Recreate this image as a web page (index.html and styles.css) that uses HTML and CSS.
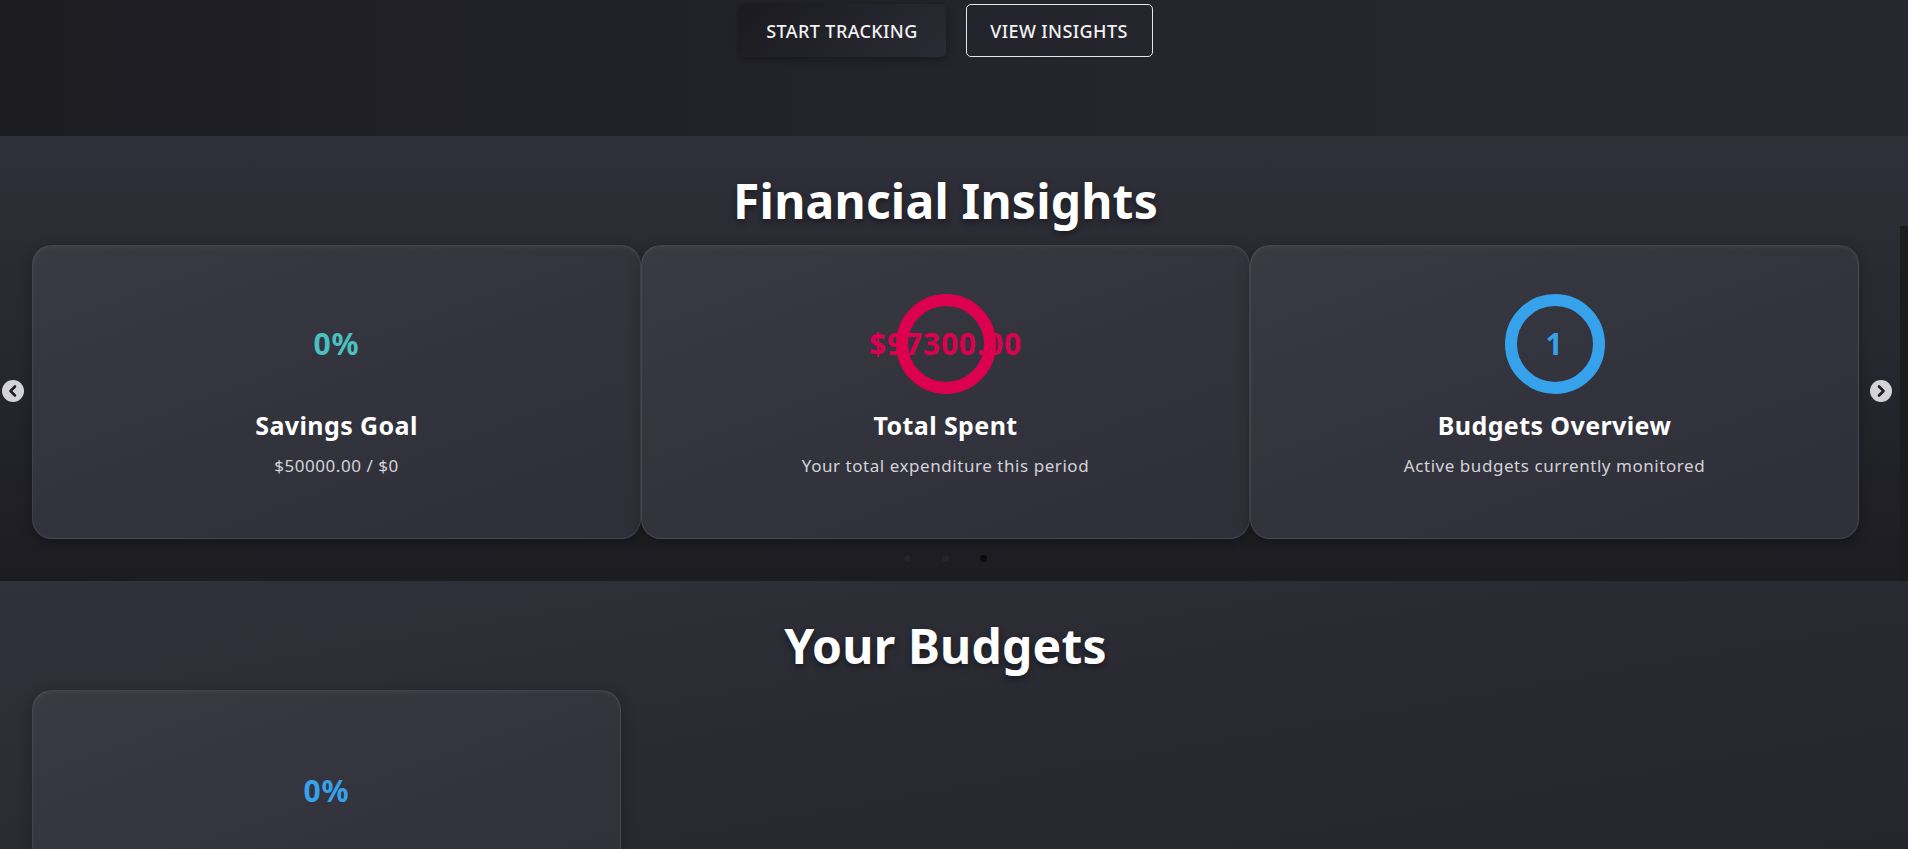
FILE: index.html
```html
<!DOCTYPE html>
<html lang="en">
<head>
<meta charset="utf-8">
<title>Finance Tracker</title>
<link rel="stylesheet" href="styles.css">
</head>
<body>
<header class="hero">
  <div class="hero-actions">
    <button class="btn btn-primary">START TRACKING</button>
    <button class="btn btn-outline">VIEW INSIGHTS</button>
  </div>
</header>

<section class="insights">
  <h2 class="section-title">Financial Insights</h2>
  <div class="carousel">
    <button class="arrow arrow-left" aria-label="Previous">
      <svg viewBox="0 0 22 22" width="22" height="22"><circle cx="11" cy="11" r="11" fill="#d4d4d8"/><path d="M13 6.5 L8.5 11 L13 15.5" fill="none" stroke="#1e1e24" stroke-width="2.6" stroke-linecap="round" stroke-linejoin="round"/></svg>
    </button>
    <div class="track">
      <div class="card">
        <div class="ring ring-empty"><span class="ring-value teal">0%</span></div>
        <h3 class="card-title">Savings Goal</h3>
        <p class="card-text">$50000.00 / $0</p>
      </div>
      <div class="card">
        <div class="ring ring-red"><span class="ring-value red">$97300.00</span></div>
        <h3 class="card-title">Total Spent</h3>
        <p class="card-text">Your total expenditure this period</p>
      </div>
      <div class="card">
        <div class="ring ring-blue"><span class="ring-value blue">1</span></div>
        <h3 class="card-title">Budgets Overview</h3>
        <p class="card-text">Active budgets currently monitored</p>
      </div>
    </div>
    <button class="arrow arrow-right" aria-label="Next">
      <svg viewBox="0 0 22 22" width="22" height="22"><circle cx="11" cy="11" r="11" fill="#d4d4d8"/><path d="M9 6.5 L13.5 11 L9 15.5" fill="none" stroke="#1e1e24" stroke-width="2.6" stroke-linecap="round" stroke-linejoin="round"/></svg>
    </button>
  </div>
  <div class="dots">
    <span class="dot"></span>
    <span class="dot"></span>
    <span class="dot dot-active"></span>
  </div>
  <div class="side-strip"></div>
</section>

<section class="budgets">
  <h2 class="section-title">Your Budgets</h2>
  <div class="budget-grid">
    <div class="card budget-card">
      <div class="ring ring-empty"><span class="ring-value blue">0%</span></div>
    </div>
  </div>
</section>
</body>
</html>
```
FILE: styles.css
```css
* { box-sizing: border-box; }

html, body {
  margin: 0;
  padding: 0;
  height: 849px;
  overflow: hidden;
}

body {
  font-family: "Noto Sans", "Open Sans", sans-serif;
  background: #26262e;
  color: #fff;
}

.hero {
  height: 136px;
  padding: 4px 17px 0 0;
  background: linear-gradient(90deg, #1c1c21 0%, #24242c 50%, #272730 100%);
}

.hero-actions {
  display: flex;
  justify-content: center;
  gap: 20px;
}

.btn {
  height: 53px;
  font-family: "Noto Sans", sans-serif;
  font-size: 18px;
  font-weight: 500;
  letter-spacing: 0.4px;
  color: #f2f2f2;
  border-radius: 5px;
  cursor: pointer;
  padding: 0;
}

.btn-primary {
  width: 207px;
  border: none;
  background: linear-gradient(135deg, #1a1a1f 0%, #2b2b35 100%);
  box-shadow: 0 2px 8px rgba(0, 0, 0, 0.35);
}

.btn-outline {
  width: 187px;
  border: 1px solid #e6e6ea;
  background: transparent;
}

.insights {
  position: relative;
  height: 445px;
  padding: 36px 17px 0 0;
  background: linear-gradient(180deg, #2f2f39 0%, #292932 40%, #1c1c21 100%);
}

.section-title {
  margin: 0;
  text-align: center;
  font-size: 48px;
  line-height: 58px;
  font-weight: 700;
  letter-spacing: 0.2px;
  color: #fff;
  text-shadow: 0 3px 6px rgba(0, 0, 0, 0.45);
}

.carousel {
  position: relative;
  margin-top: 15px;
  padding: 0 32px;
}

.track {
  display: grid;
  grid-template-columns: repeat(3, 1fr);
}

.card {
  height: 294px;
  padding-top: 48px;
  display: flex;
  flex-direction: column;
  align-items: center;
  border-radius: 20px;
  border: 1px solid rgba(255, 255, 255, 0.09);
  background: linear-gradient(160deg, #3a3a44 0%, #33333d 50%, #2f2f39 100%);
  box-shadow: 0 4px 14px rgba(0, 0, 0, 0.3), inset 0 2px 3px rgba(255, 255, 255, 0.04);
}

.ring {
  width: 100px;
  height: 100px;
  flex: none;
  border-radius: 50%;
  border: 12px solid transparent;
  display: flex;
  align-items: center;
  justify-content: center;
}

.ring-red { border-color: #dc004e; }
.ring-blue { border-color: #36a2eb; }

.ring-value {
  font-size: 30px;
  font-weight: 700;
  line-height: 1;
  letter-spacing: 0.8px;
  white-space: nowrap;
}

.teal { color: #4bc0c0; }
.red { color: #dc004e; }
.blue { color: #36a2eb; }

.card-title {
  margin: 13px 0 0;
  font-size: 25px;
  line-height: 36px;
  font-weight: 700;
  letter-spacing: 0.4px;
  color: #fff;
}

.card-text {
  margin: 11px 0 0;
  font-size: 17px;
  line-height: 24px;
  letter-spacing: 0.55px;
  color: #d2d2d8;
}

.arrow {
  position: absolute;
  top: 135px;
  width: 22px;
  height: 22px;
  padding: 0;
  border: none;
  background: none;
  cursor: pointer;
}

.arrow svg { display: block; }
.arrow-left { left: 2px; }
.arrow-right { right: -1px; }

.dots {
  display: flex;
  justify-content: center;
  gap: 31px;
  margin-top: 16px;
}

.dot {
  width: 7px;
  height: 7px;
  border-radius: 50%;
  background: #25252b;
}

.dot-active { background: #0b0b0d; }

.side-strip {
  position: absolute;
  right: 0;
  top: 90px;
  bottom: 0;
  width: 8px;
  background: #1b1b20;
}

.budgets {
  height: 268px;
  overflow: hidden;
  padding: 36px 17px 0 0;
  background: linear-gradient(170deg, #31313b 0%, #2a2a33 50%, #25252d 100%);
}

.budget-grid {
  display: grid;
  grid-template-columns: 589px;
  margin-top: 15px;
  padding: 0 32px;
}

.budget-card {
  height: 300px;
  padding-top: 50px;
}
```
